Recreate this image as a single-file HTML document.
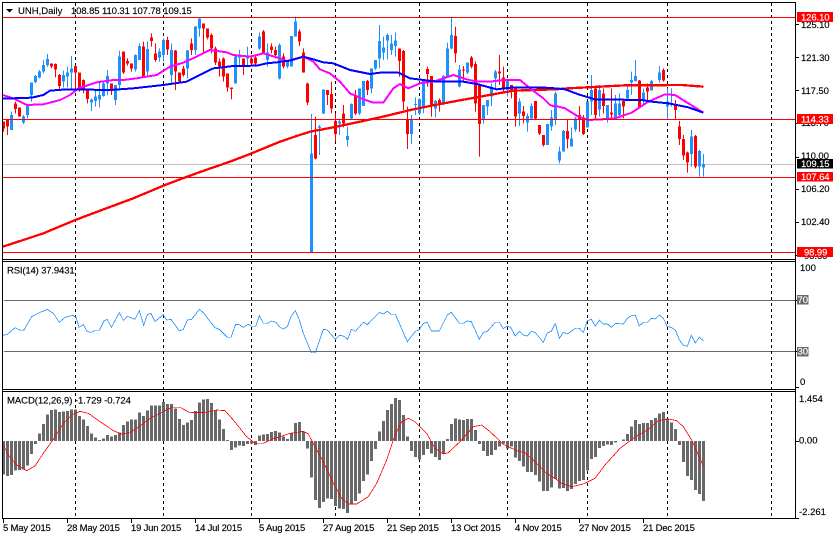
<!DOCTYPE html>
<html><head><meta charset="utf-8"><title>UNH,Daily</title>
<style>
html,body{margin:0;padding:0;background:#fff;overflow:hidden}
svg{display:block;position:absolute;left:0;top:0}
text{font-family:"Liberation Sans",sans-serif;font-size:9.5px;fill:#000;stroke:#000;stroke-width:.15px}
text.w{fill:#fff;stroke:#fff}
.l{fill:none;shape-rendering:crispEdges}
</style></head><body>
<svg width="835" height="536" viewBox="0 0 835 536" xmlns="http://www.w3.org/2000/svg">
<rect width="835" height="536" fill="#fff"/>
<!-- grey/level lines + vertical dashed -->
<path class="l" stroke="#c0c0c0" d="M3 164.5H796"/>
<path class="l" stroke="#696969" d="M4 300.5H796M4 351.5H796"/>
<path class="l" stroke="#000" stroke-dasharray="3 3" d="M75.5 3V518M163.5 3V518M251.5 3V518M335.5 3V518M419.5 3V518M507.5 3V518M587.5 3V518M667.5 3V518M771.5 3V518"/>

<!-- candles (y in 3x units) -->
<g transform="scale(1,.33333)" shape-rendering="crispEdges" fill="none">
<path stroke="#ff0000" stroke-width="1" d="M3.5 365V395M7.5 358V405M15.5 305V340M19.5 322V350M51.5 190V205M55.5 190V232M59.5 222V268M75.5 196V273M79.5 218V275M83.5 238V280M87.5 270V310M111.5 250V285M123.5 155V222M127.5 175V197M131.5 190V215M143.5 125V232M151.5 100V140M155.5 130V185M167.5 110V165M175.5 150V270M179.5 218V250M183.5 198V230M191.5 115V165M203.5 70V160M207.5 85V118M211.5 100V160M215.5 140V195M219.5 175V230M223.5 172V245M227.5 220V275M231.5 263V298M243.5 175V225M251.5 165V200M255.5 165V200M263.5 90V160M271.5 130V160M275.5 140V175M283.5 160V205M299.5 88V138M303.5 145V218M307.5 248V315M315.5 350V478M327.5 270V315M331.5 245V340M335.5 340V425M343.5 315V382M355.5 270V345M367.5 240V285M399.5 145V230M403.5 150V330M407.5 320V447M427.5 200V260M431.5 228V350M439.5 295V335M455.5 80V188M463.5 198V245M471.5 168V205M475.5 185V335M479.5 250V470M499.5 165V255M503.5 200V275M511.5 255V295M515.5 265V380M523.5 318V370M535.5 303V360M539.5 375V405M543.5 405V440M567.5 360V445M579.5 318V395M583.5 345V405M595.5 258V358M603.5 265V340M611.5 265V355M623.5 300V355M639.5 240V325M647.5 250V300M663.5 205V245M675.5 300V358M679.5 363V435M683.5 405V480M687.5 455V518M695.5 405V505"/>
<path stroke="#ff0000" stroke-width="3" d="M3.5 365V385M7.5 358V380M15.5 310V327M19.5 322V350M51.5 190V200M55.5 192V208M59.5 225V258M75.5 198V218M79.5 218V262M83.5 240V268M87.5 270V297M111.5 250V272M123.5 155V218M127.5 183V190M131.5 190V205M143.5 140V232M151.5 113V123M155.5 160V180M167.5 120V148M175.5 152V215M179.5 218V245M183.5 205V225M191.5 130V150M203.5 70V85M207.5 85V112M211.5 105V145M215.5 145V188M219.5 185V200M223.5 175V230M227.5 220V263M231.5 263V267M243.5 175V195M251.5 175V190M255.5 172V190M263.5 95V158M271.5 140V150M275.5 150V165M283.5 170V200M299.5 95V125M303.5 158V217M307.5 250V308M315.5 405V475M327.5 270V285M331.5 282V325M335.5 363V402M343.5 340V370M355.5 285V340M367.5 243V270M399.5 145V183M403.5 153V305M407.5 360V402M427.5 207V222M431.5 228V315M439.5 300V315M455.5 108V160M463.5 208V212M471.5 172V200M475.5 192V310M479.5 255V372M499.5 215V220M503.5 232V265M511.5 255V275M515.5 265V350M523.5 335V348M535.5 303V355M539.5 375V400M543.5 405V435M567.5 393V417M579.5 345V360M583.5 355V402M595.5 265V345M603.5 280V318M611.5 337V343M623.5 303V320M639.5 242V322M647.5 262V275M663.5 210V242M675.5 315V330M679.5 380V417M683.5 417V467M687.5 458V488M695.5 408V500"/>
<path stroke="#1e90ff" stroke-width="1" d="M11.5 335V390M23.5 345V372M27.5 315V355M31.5 248V305M35.5 225V250M39.5 210V235M43.5 180V220M47.5 162V200M63.5 212V262M67.5 200V262M71.5 168V270M91.5 295V333M95.5 270V320M99.5 248V322M103.5 245V290M107.5 210V285M115.5 255V315M119.5 152V270M135.5 163V215M139.5 130V180M147.5 125V232M159.5 145V185M163.5 115V185M171.5 130V255M187.5 150V235M195.5 78V165M199.5 55V110M235.5 165V250M239.5 150V200M247.5 140V200M259.5 98V150M267.5 130V200M279.5 130V238M287.5 185V205M291.5 108V200M295.5 50V110M311.5 342V756M319.5 375V465M323.5 268V342M339.5 360V405M347.5 380V440M351.5 310V358M359.5 265V345M363.5 243V318M371.5 205V280M375.5 180V210M379.5 75V205M383.5 110V180M387.5 100V178M391.5 105V165M395.5 98V170M411.5 345V432M415.5 292V345M419.5 295V345M423.5 240V340M435.5 300V352M443.5 225V315M447.5 128V232M451.5 50V148M459.5 195V262M467.5 188V222M483.5 315V370M487.5 300V345M491.5 250V318M495.5 210V270M507.5 240V290M519.5 295V378M527.5 340V395M531.5 310V358M547.5 372V435M551.5 330V392M555.5 275V375M559.5 440V490M563.5 390V455M571.5 382V440M575.5 350V395M587.5 305V382M591.5 225V345M599.5 255V350M607.5 315V368M615.5 285V355M619.5 280V350M627.5 255V300M631.5 215V285M635.5 180V245M643.5 265V315M651.5 240V272M659.5 198V248M667.5 265V358M671.5 265V320M691.5 390V500M699.5 450V530M703.5 462V530"/>
<path stroke="#1e90ff" stroke-width="3" d="M11.5 345V390M23.5 350V368M27.5 315V345M31.5 248V285M35.5 228V246M39.5 215V232M43.5 195V215M47.5 177V195M63.5 225V245M67.5 218V230M71.5 205V218M91.5 298V308M95.5 290V303M99.5 285V298M103.5 250V288M107.5 228V250M115.5 255V300M119.5 170V255M135.5 165V208M139.5 138V180M147.5 147V215M159.5 155V172M163.5 120V165M171.5 150V225M187.5 152V205M195.5 80V150M199.5 55V85M235.5 170V250M239.5 170V172M247.5 172V175M259.5 110V145M267.5 158V180M279.5 135V235M287.5 185V200M291.5 108V200M295.5 65V110M311.5 460V756M319.5 380V384M323.5 268V340M339.5 365V370M347.5 408V420M351.5 312V355M359.5 265V340M363.5 243V318M371.5 205V265M375.5 180V205M379.5 123V175M383.5 143V158M387.5 105V122M391.5 130V150M395.5 122V138M411.5 360V402M415.5 312V315M419.5 297V340M423.5 240V325M435.5 303V325M443.5 228V310M447.5 145V230M451.5 105V145M459.5 208V260M467.5 188V218M483.5 315V358M487.5 300V320M491.5 265V290M495.5 215V235M507.5 240V270M519.5 305V340M527.5 348V368M531.5 318V355M547.5 372V435M551.5 353V380M555.5 280V358M559.5 455V482M563.5 393V455M571.5 415V440M575.5 355V388M587.5 305V382M591.5 270V305M599.5 270V328M607.5 315V355M615.5 310V355M619.5 310V345M627.5 270V295M631.5 240V247M635.5 228V243M643.5 278V300M651.5 243V272M659.5 217V240M667.5 305V320M671.5 310V315M691.5 410V462M699.5 453V500M703.5 492V503"/>
</g>

<!-- moving averages -->
<g class="l" stroke-width="7" stroke="#ff0000">
<polyline class="l" transform="scale(.33333)" points="8,740 70,720 130,700 226,660 300,632 400,595 490,557 540,538 600,516 690,485 750,462 840,425"/>
<polyline class="l" transform="translate(280,0) scale(.33333)" points="0,425 50,408 90,395 160,382 240,365 300,352 400,328 480,312 600,290 700,272 825,268"/>
<polyline class="l" transform="translate(555,0) scale(.33333)" points="0,268 40,265 210,256 380,255 445,260"/>
</g>
<g class="l" stroke-width="6" stroke="#ff00ff">
<polyline class="l" transform="scale(.33333)" points="8,285 40,295 80,315 130,313 180,300 210,285 235,265 290,247 340,240 370,240 410,235 470,225 510,200 550,188 590,170 630,150 680,157 700,165 750,170 790,160 840,175"/>
<polyline class="l" transform="translate(280,0) scale(.33333)" points="0,175 20,183 50,175 70,170 100,185 120,208 150,220 180,245 210,280 250,298 280,308 310,308 340,265 360,252 385,265 420,250 470,242 520,225 560,238 590,245 630,245 670,240 720,240 750,265 790,295 810,315 825,320"/>
<polyline class="l" transform="translate(555,0) scale(.33333)" points="0,317 30,325 70,350 100,360 140,358 180,355 230,338 280,305 330,283 360,285 400,310 445,338"/>
</g>
<g class="l" stroke-width="6" stroke="#0000ff">
<polyline class="l" transform="scale(.33333)" points="8,296 95,293 130,285 150,272 200,268 330,270 400,265 490,255 560,245 600,225 640,205 700,198 770,197 800,190 840,186"/>
<polyline class="l" transform="translate(280,0) scale(.33333)" points="0,185 30,182 70,170 100,178 130,187 160,190 210,210 270,222 300,218 355,218 390,235 430,240 470,245 550,245 590,252 650,268 700,262 780,262 825,265"/>
<polyline class="l" transform="translate(555,0) scale(.33333)" points="0,265 30,268 70,283 120,298 260,300 290,305 340,310 400,322 445,338"/>
</g>

<!-- horizontal red lines -->
<path class="l" stroke="#ff0000" d="M3 17.5H796M3 119.5H796M3 177.5H796M3 252.5H796"/>

<!-- RSI -->
<g class="l" stroke-width="2.4" stroke="#1e90ff">
<polyline class="l" transform="translate(0,240) scale(.33333)" points="8,286 22,283 45,263 62,271 72,270 95,230 118,218 142,208 160,220 178,247 195,232 218,226 228,232 237,262 250,254 262,275 275,277 285,271 298,271 312,243 322,238 334,262 358,218 370,241 382,229 405,238 418,212 431,256 442,224 453,220 465,245 490,224 500,240 513,238 538,273 550,268 562,240 575,238 598,208 610,218 645,263 658,268 682,292 693,292 707,253 718,254 730,262 745,253 755,259 767,259 778,227 790,250 802,250 815,243 828,247 840,262"/>
<polyline class="l" transform="translate(280,240) scale(.33333)" points="0,262 10,267 22,260 34,228 46,212 58,240 70,280 94,338 106,338 130,268 142,270 166,298 178,286 190,288 203,298 214,268 226,274 250,247 262,254 298,217 310,222 322,214 334,223 346,223 358,250 382,305 406,274 418,269 430,250 442,247 454,273 478,273 502,225 514,217 538,250 550,250 562,243 574,245 598,298 610,277 622,274 646,247 658,247 670,266 682,258 692,262 706,288 718,274 730,285 742,288 754,274 766,278 790,307 802,279 814,274 826,250"/>
<polyline class="l" transform="translate(555,160) scale(.33333)" points="1,490 13,535 25,517 37,522 61,505 73,505 85,518 97,482 109,478 121,498 133,481 145,492 157,492 169,502 181,490 205,492 217,475 229,467 241,465 253,498 265,487 277,487 289,475 301,477 313,465 325,475 337,500 349,502 361,510 373,540 385,556 397,559 409,526 421,549 433,532 445,542"/>
</g>

<!-- MACD histogram -->
<path class="l" transform="translate(0,380) scale(1,.33333)" stroke="#696969" stroke-width="3" d="M3.5 183V283M7.5 183V288M11.5 183V285M15.5 183V272M19.5 183V270M23.5 183V268M27.5 183V256M31.5 183V222M35.5 183V192M39.5 183V160M43.5 183V132M47.5 183V103M51.5 183V90M55.5 183V88M59.5 183V96M63.5 183V94M67.5 183V93M71.5 183V88M75.5 183V88M79.5 183V108M83.5 183V118M87.5 183V138M91.5 183V160M95.5 183V172M99.5 183V180M103.5 183V175M107.5 183V165M111.5 183V170M115.5 183V165M119.5 183V158M123.5 183V135M127.5 183V124M131.5 183V118M135.5 183V118M139.5 183V97M143.5 183V108M147.5 183V92M151.5 183V76M155.5 183V77M159.5 183V76M163.5 183V66M167.5 183V72M171.5 183V72M175.5 183V85M179.5 183V117M183.5 183V135M187.5 183V127M191.5 183V120M195.5 183V93M199.5 183V67M203.5 183V58M207.5 183V57M211.5 183V69M215.5 183V92M219.5 183V118M223.5 183V147M227.5 183V180M231.5 183V210M235.5 183V202M239.5 183V197M243.5 183V198M247.5 183V192M251.5 183V191M255.5 183V195M259.5 183V166M263.5 183V163M267.5 183V162M271.5 183V156M275.5 183V153M279.5 183V158M283.5 183V170M287.5 183V177M291.5 183V160M295.5 183V129M299.5 183V126M303.5 183V155M307.5 183V205M311.5 183V292M315.5 183V360M319.5 183V384M323.5 183V366M327.5 183V355M331.5 183V357M335.5 183V378M339.5 183V385M343.5 183V387M347.5 183V399M351.5 183V372M355.5 183V363M359.5 183V340M363.5 183V303M367.5 183V283M371.5 183V243M375.5 183V207M379.5 183V155M383.5 183V123M387.5 183V90M391.5 183V72M395.5 183V54M399.5 183V60M403.5 183V105M407.5 183V170M411.5 183V213M415.5 183V231M419.5 183V238M423.5 183V225M427.5 183V207M431.5 183V221M435.5 183V231M439.5 183V240M443.5 183V222M447.5 183V177M451.5 183V132M455.5 183V115M459.5 183V118M463.5 183V120M467.5 183V117M471.5 183V117M475.5 183V150M479.5 183V192M483.5 183V213M487.5 183V228M491.5 183V225M495.5 183V210M499.5 183V200M503.5 183V190M507.5 183V205M511.5 183V200M515.5 183V233M519.5 183V243M523.5 183V260M527.5 183V276M531.5 183V276M535.5 183V285M539.5 183V305M543.5 183V333M547.5 183V333M551.5 183V323M555.5 183V297M559.5 183V325M563.5 183V324M567.5 183V333M571.5 183V327M575.5 183V312M579.5 183V303M583.5 183V300M587.5 183V272M591.5 183V237M595.5 183V231M599.5 183V204M603.5 183V198M607.5 183V193M611.5 183V195M615.5 183V187M619.5 183V183M623.5 183V178M627.5 183V162M631.5 183V140M635.5 183V120M639.5 183V132M643.5 183V129M647.5 183V129M651.5 183V120M655.5 183V114M659.5 183V100M663.5 183V96M667.5 183V115M671.5 183V128M675.5 183V147M679.5 183V195M683.5 183V246M687.5 183V288M691.5 183V300M695.5 183V330M699.5 183V342M703.5 183V363"/>
<!-- MACD signal -->
<g class="l" stroke-width="2.4" stroke="#ff0000">
<polyline class="l" transform="translate(0,380) scale(.33333)" points="8,190 25,225 50,255 80,272 105,258 130,220 160,178 190,130 215,105 240,94 265,100 300,125 340,152 365,162 390,158 420,138 450,115 490,95 515,82 540,82 570,98 620,97 650,90 675,92 700,120 740,170 765,190 790,190 815,178 840,170"/>
<polyline class="l" transform="translate(280,380) scale(.33333)" points="0,170 30,160 70,154 85,162 110,210 130,245 160,310 185,355 205,372 230,372 265,350 290,310 320,240 345,165 365,125 385,115 405,125 440,160 465,205 490,222 505,218 540,185 580,140 605,135 630,155 670,193 710,212 735,218 770,250 800,280 825,295"/>
<polyline class="l" transform="translate(555,380) scale(.33333)" points="0,295 20,310 50,320 85,312 120,295 150,255 195,205 235,175 280,148 310,122 340,117 365,122 385,140 410,180 445,258"/>
</g>

<!-- frames -->
<path class="l" stroke="#000" d="M2 2.5H796M2 259.5H796M2 261.5H796M2 389.5H796M2 391.5H796M2 518.5H796M2.5 2V519M795.5 2V519"/>
<!-- ticks -->
<path class="l" stroke="#000" d="M796 24.5H799M796 57.5H799M796 90.5H799M796 123.5H799M796 157.5H799M796 189.5H799M796 222.5H799M796 255.5H799M796 300.5H799M796 351.5H799M796 387.5H799M796 441.5H799M796 518.5H799M3.5 519V523M67.5 519V523M131.5 519V523M195.5 519V523M259.5 519V523M323.5 519V523M387.5 519V523M451.5 519V523M515.5 519V523M579.5 519V523M643.5 519V523"/>

<!-- header -->
<polygon points="6,9 13,9 9.5,12.5" fill="#000"/>
<text x="18" y="14">UNH,Daily</text>
<text x="71" y="14" letter-spacing="-.1">108.85 110.31 107.78 109.15</text>
<text x="7" y="273.5" letter-spacing="-.15">RSI(14) 37.9431</text>
<text x="7" y="403.5" letter-spacing="-.05">MACD(12,26,9) -1.729 -0.724</text>

<!-- price axis -->
<g letter-spacing="-.1">
<text x="801" y="28">125.10</text>
<text x="801" y="61">121.30</text>
<text x="801" y="94">117.50</text>
<text x="801" y="126">113.70</text>
<text x="801" y="159">110.00</text>
<text x="801" y="192">106.20</text>
<text x="801" y="225">102.40</text>
<text x="804" y="259">98.60</text>
</g>
<rect x="797" y="12" width="36" height="10" fill="#ff0000"/>
<rect x="797" y="114" width="36" height="10" fill="#ff0000"/>
<rect x="797" y="159" width="36" height="9.5" fill="#000"/>
<rect x="797" y="172" width="36" height="9.5" fill="#ff0000"/>
<rect x="797" y="247" width="36" height="10" fill="#ff0000"/>
<g letter-spacing="-.1">
<text class="w" x="801" y="20.5">126.10</text>
<text class="w" x="801" y="122.5">114.33</text>
<text class="w" x="801" y="167">109.15</text>
<text class="w" x="801" y="180">107.64</text>
<text class="w" x="804" y="255.5">98.99</text>
</g>

<!-- RSI axis -->
<text x="800" y="271">100</text>
<rect x="797" y="295" width="11.5" height="9.5" fill="#696969"/>
<text class="w" x="797.5" y="303">70</text>
<rect x="797" y="347" width="11.5" height="9.5" fill="#696969"/>
<text class="w" x="797.5" y="354.5">30</text>
<text x="800" y="385">0</text>

<!-- MACD axis -->
<text x="799" y="402">1.454</text>
<text x="799" y="443.5">0.00</text>
<text x="799" y="515">-2.261</text>

<!-- time axis -->
<g letter-spacing="-.2">
<text x="3" y="531">5 May 2015</text>
<text x="67" y="531">28 May 2015</text>
<text x="131" y="531">19 Jun 2015</text>
<text x="195" y="531">14 Jul 2015</text>
<text x="259" y="531">5 Aug 2015</text>
<text x="323" y="531">27 Aug 2015</text>
<text x="387" y="531">21 Sep 2015</text>
<text x="451" y="531">13 Oct 2015</text>
<text x="515" y="531">4 Nov 2015</text>
<text x="579" y="531">27 Nov 2015</text>
<text x="643" y="531">21 Dec 2015</text>
</g>
</svg>
</body></html>
